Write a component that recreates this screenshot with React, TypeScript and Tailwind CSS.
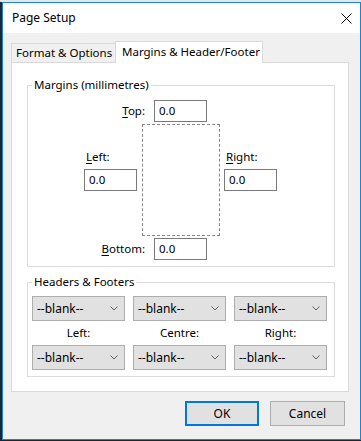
import React from 'react';

const font = { fontFamily: '"Noto Sans", "Liberation Sans", sans-serif' };

function TextBox({ value }: { value: string }) {
  return (
    <div className="flex h-[22px] w-[53px] items-center border border-[#7a7a7a] bg-white pl-[4px]">
      {value}
    </div>
  );
}

function Chevron() {
  return (
    <svg width="8" height="5" viewBox="0 0 8 5" className="text-[#606060]">
      <path d="M0.5 0.5 L4 4 L7.5 0.5" fill="none" stroke="currentColor" strokeWidth="1" />
    </svg>
  );
}

function Select({ value }: { value: string }) {
  return (
    <div className="flex h-[25px] w-[93px] items-center justify-between border border-[#adadad] bg-[#e1e1e1] pl-[4px] pr-[6px]">
      <span className="text-[12px]">{value}</span>
      <Chevron />
    </div>
  );
}

function MarginsGroup() {
  return (
    <fieldset className="ml-[15px] mt-[14px] w-[308px] border border-[#dcdcdc] pb-[6px]">
      <legend className="ml-[4px] px-[2px] leading-[16px]">Margins (millimetres)</legend>
      <div className="mt-[7px] flex items-center">
        <span className="w-[117px] text-right">
          <u className="underline-offset-2">T</u>op:
        </span>
        <div className="ml-[9px]">
          <TextBox value="0.0" />
        </div>
      </div>
      <div className="mt-[2px] flex items-start">
        <div className="ml-[56px] mt-[25px] flex w-[53px] flex-col">
          <span className="pl-[2px] leading-[16px]">
            <u className="underline-offset-2">L</u>eft:
          </span>
          <div className="mt-[4px]">
            <TextBox value="0.0" />
          </div>
        </div>
        <div className="ml-[5px] h-[112px] w-[78px] border border-dashed border-[#8a8a8a]" />
        <div className="ml-[4px] mt-[25px] flex w-[53px] flex-col">
          <span className="pl-[2px] leading-[16px]">
            <u className="underline-offset-2">R</u>ight:
          </span>
          <div className="mt-[4px]">
            <TextBox value="0.0" />
          </div>
        </div>
      </div>
      <div className="mt-[2px] flex items-center">
        <span className="w-[117px] text-right">
          <u className="underline-offset-2">B</u>ottom:
        </span>
        <div className="ml-[9px]">
          <TextBox value="0.0" />
        </div>
      </div>
    </fieldset>
  );
}

function HeadersGroup() {
  const labels = ['Left:', 'Centre:', 'Right:'];
  return (
    <fieldset className="ml-[15px] mt-[7px] w-[308px] border border-[#dcdcdc] pb-[6px]">
      <legend className="ml-[4px] px-[2px] leading-[16px]">Headers &amp; Footers</legend>
      <div className="ml-[4px] mt-[6px] flex gap-[8px]">
        {labels.map((l) => (
          <Select key={l} value="--blank--" />
        ))}
      </div>
      <div className="ml-[4px] flex gap-[8px]">
        {labels.map((l) => (
          <div key={l} className="w-[93px] text-center leading-[24px]">
            {l}
          </div>
        ))}
      </div>
      <div className="ml-[4px] flex gap-[8px]">
        {labels.map((l) => (
          <Select key={l} value="--blank--" />
        ))}
      </div>
    </fieldset>
  );
}

export default function App() {
  return (
    <div className="h-[441px] w-[361px] overflow-hidden bg-[#1d2733] text-[11.5px] text-black" style={font}>
      <div className="h-[2px] bg-[#e6e6e6]" />
      <div className="ml-[2px] flex h-[438px] w-[359px] flex-col border border-[#1883d7] bg-[#f0f0f0]">
        <div className="flex h-[30px] items-center justify-between bg-white pl-[9px] pr-[8px]">
          <span className="text-[12px]">Page Setup</span>
          <svg width="11" height="11" viewBox="0 0 11 11">
            <path d="M0.5 0.5 L10.5 10.5 M10.5 0.5 L0.5 10.5" stroke="#000" strokeWidth="1" />
          </svg>
        </div>
        <div className="pl-[8px] pt-[8px]">
          <div className="flex items-end">
            <div className="flex h-[19px] w-[104px] items-center border-l border-t border-[#d9d9d9] bg-[#f0f0f0] pl-[4px]">
              Format &amp; Options
            </div>
            <div className="relative z-10 -mb-px flex h-[22px] w-[148px] items-center border border-b-0 border-[#d9d9d9] bg-white pb-[2px] pl-[6px]">
              Margins &amp; Header/Footer
            </div>
          </div>
          <div className="h-[330px] w-[338px] border border-[#d9d9d9] bg-white">
            <MarginsGroup />
            <HeadersGroup />
          </div>
          <div className="mt-[9px] flex w-[338px] justify-end gap-[11px] pr-[4px]">
            <button className="h-[25px] w-[74px] border-2 border-[#0078d7] bg-[#e1e1e1] text-[12px]">OK</button>
            <button className="h-[25px] w-[75px] border border-[#adadad] bg-[#e1e1e1] text-[12px]">Cancel</button>
          </div>
        </div>
      </div>
    </div>
  );
}
